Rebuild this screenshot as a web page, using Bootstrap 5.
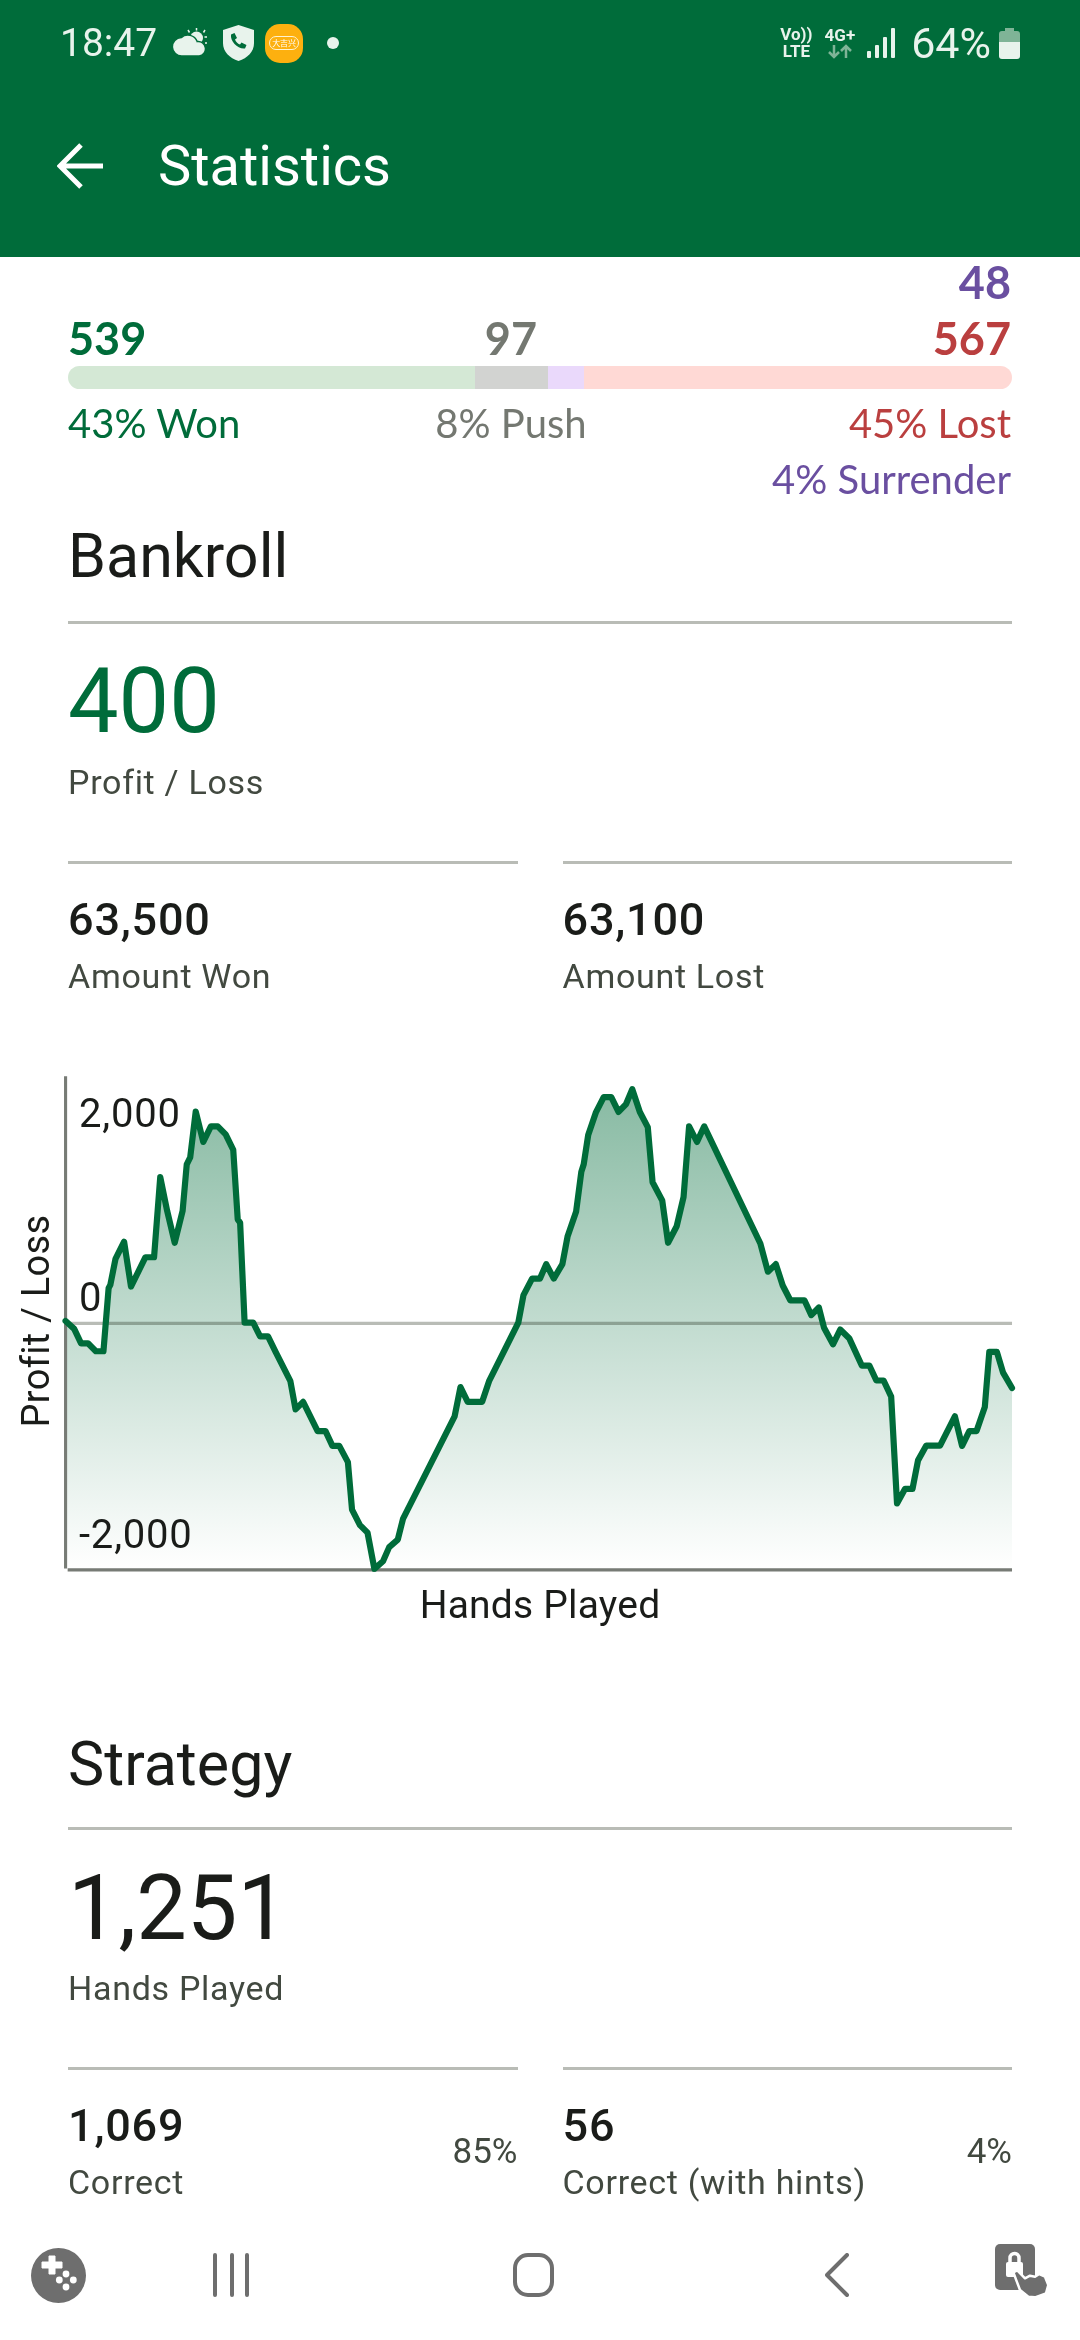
<!DOCTYPE html>
<html lang="en">
<head>
    <meta charset="UTF-8">
    <meta name="viewport" content="width=device-width, initial-scale=1.0">
    <title>Statistics</title>
    <link href="https://cdn.jsdelivr.net/npm/bootstrap@5.3.2/dist/css/bootstrap.min.css" rel="stylesheet">
    <style>
        html, body { height: 100%; }
        body { background: #fff; color: #1a1c19; font-family: Roboto, sans-serif; overflow: hidden; }
        .app-shell { width: 1080px; height: 2340px; }

        /* top bars */
        .app-head { background: #006c3a; height: 257px; color: #fff; padding: 0; display: block; }
        .status-line { height: 86px; padding: 0 60px; color: #e8f3ec; }
        .status-time { font-size: 39px; line-height: 1; }
        .status-pct { font-size: 43px; line-height: 1; }
        .net-txt { font-size: 17px; font-weight: 700; line-height: 17px; text-align: center; color: #e8f3ec; }
        .yellow-app { width: 38px; height: 39px; margin-left: 11px; border-radius: 15px; background: #fdb00f; }
        .yellow-pill { font-size: 8px; line-height: 11px; width: 30px; height: 14px; border: 1.5px solid #fff3d0; border-radius: 7px; color: #fff; text-align: center; font-family: "Noto Sans CJK SC", sans-serif; overflow: hidden; white-space: nowrap; }
        .status-dot { width: 12px; height: 12px; border-radius: 50%; background: #e8f3ec; }
        .net-gap { margin-left: 12px; }
        .head-row { height: 80px; padding-left: 57px; margin-top: 40px; }
        .head-title { font-size: 56px; line-height: 1; margin-left: 55px; }

        /* page body */
        .stats-body { padding: 5px 68px 0; height: 1963px; }
        .count-line { font-family: Lato, sans-serif; font-weight: 700; font-size: 45px; line-height: 40px; padding-right: 1px; }
        .label-line { font-family: Lato, sans-serif; font-size: 40px; line-height: 44px; padding-right: 1px; }
        .tone-won { color: #006c3a; }
        .tone-push { color: #747871; }
        .tone-lost { color: #ba3f3f; }
        .tone-sur { color: #6a4fa0; }
        .mid-cell { display: flex; justify-content: center; white-space: nowrap; }
        .tally-bar { height: 23px; border-radius: 12px; background: #fff; }
        .bar-won { background: #d4e8d5; }
        .bar-push { background: #d2d3d1; }
        .bar-sur { background: #ead9fb; }
        .bar-lost { background: #ffd9d5; }
        .sect-title { font-size: 61px; line-height: 70px; font-weight: 400; margin: 0; }
        .rule-line { height: 3px; background: #b9bcb6; }
        .big-num { font-size: 90px; line-height: 100px; }
        .sub-label { font-size: 34px; line-height: 38px; color: #424940; letter-spacing: .7px; }
        .mid-num { font-size: 45px; line-height: 50px; font-weight: 500; letter-spacing: .8px; }
        .pct-label { font-size: 35px; color: #424940; padding-top: 3px; }
        .stat-row { --bs-gutter-x: 45px; }

        /* chart */
        .chart-box { position: relative; margin: 66px -68px 0; height: 524px; }
        .chart-box svg { display: block; }
        .chart-txt { position: absolute; font-size: 40px; line-height: 40px; letter-spacing: .8px; color: #1a1c19; }
        .ax-title { left: 36px; top: 260px; font-size: 38px; letter-spacing: .3px; transform: translate(-50%, -50%) rotate(-90deg); white-space: nowrap; }
        .hands-label { font-size: 39px; line-height: 40px; letter-spacing: .2px; text-align: center; margin-left: -68px; margin-right: -68px; }

        /* space between stacked blocks */
        .sp-10 { margin-top: 10px; } .sp-11 { margin-top: 11px; } .sp-12 { margin-top: 12px; } .sp-16 { margin-top: 16px; }
        .sp-20 { margin-top: 20px; } .sp-28 { margin-top: 28px; } .sp-29 { margin-top: 29px; }
        .sp-30 { margin-top: 30px; } .sp-31 { margin-top: 31px; }
        .sp-60 { margin-top: 60px; } .sp-62 { margin-top: 62px; } .sp-104 { margin-top: 104px; }

        /* bottom bar */
        .sys-nav { height: 120px; padding-left: 31px; padding-bottom: 10px; }
        .sys-nav svg { flex: none; }
        .nav-b { margin-left: 127px; } .nav-c { margin-left: 264px; } .nav-d { margin-left: 271px; } .nav-e { margin-left: 146px; }
    </style>
</head>
<body>
<div class="app-shell d-flex flex-column">
    <nav class="navbar app-head">
        <div class="status-line d-flex align-items-center">
            <span class="status-time">18:47</span>
            <!-- weather -->
            <svg class="ms-3" width="34" height="30" viewBox="0 0 34 30">
                <circle cx="23.500" cy="10" r="6.500" fill="#e8f3ec"/>
                <path d="M23.500 0v2.500M15 2l1.500 2.500M32 2l-1.500 2.500M34 9h-2.500M34 15h-2" stroke="#e8f3ec" stroke-width="1.500" fill="none"/>
                <path fill="#e8f3ec" stroke="#006c3a" stroke-width="1.500" d="M9 28a9.200 9.200 0 0 1-.8-18.400 10 10 0 0 1 16 4 6.800 6.800 0 0 1 2 14.400z"/>
            </svg>
            <!-- shield with phone -->
            <svg class="ms-3" width="31" height="36" viewBox="0 0 31 36">
                <path fill="#e8f3ec" d="M15.500 0 31 5v13c0 9-6.500 15-15.500 18C6.500 33 0 27 0 18V5z"/>
                <path fill="#006c3a" d="M8 9.500l3.500-1.500 2.500 5-2 1.500c1 2.500 2.500 4 5 5l1.500-2 5 2.500-1.500 3.500c-7 1-15-7-14-14z"/>
            </svg>
            <div class="yellow-app d-flex align-items-center justify-content-center">
                <div class="yellow-pill">大吉兴</div>
            </div>
            <div class="status-dot ms-4"></div>
            <div class="net-txt ms-auto">Vo))<br>LTE</div>
            <div class="net-gap text-center">
                <div class="net-txt">4G+</div>
                <svg class="d-block mx-auto" width="26" height="15" viewBox="0 0 26 15" fill="none" stroke-width="2.500">
                    <path d="M7 1v12M2 8l5 5 5-5" stroke="#7fb497"/>
                    <path d="M19 14V2M14 7l5-5 5 5" stroke="#7fb497"/>
                </svg>
            </div>
            <!-- signal -->
            <svg class="net-gap" width="28" height="30" viewBox="0 0 28 30" fill="#e8f3ec">
                <rect x="0" y="23" width="4" height="7" rx="1"/>
                <rect x="8" y="17" width="4" height="13" rx="1"/>
                <rect x="16" y="9" width="4" height="21" rx="1"/>
                <rect x="24" y="0" width="4" height="30" rx="1"/>
            </svg>
            <span class="status-pct ms-3">64%</span>
            <svg class="ms-2" width="21" height="31" viewBox="0 0 21 31">
                <path fill="#7fb497" d="M6 0h9v3h3a3 3 0 0 1 3 3v8H0V6a3 3 0 0 1 3-3h3z"/>
                <path fill="#e8f3ec" d="M0 14h21v14a3 3 0 0 1-3 3H3a3 3 0 0 1-3-3z"/>
            </svg>
        </div>
        <div class="head-row d-flex align-items-center">
            <svg width="46" height="46" viewBox="0 0 46 46" fill="none" stroke="#fff" stroke-width="5">
                <path d="M46 23H4M24 2 3 23l21 21"/>
            </svg>
            <span class="head-title">Statistics</span>
        </div>
    </nav>

    <main class="stats-body flex-grow-1">
        <div class="count-line tone-sur text-end">48</div>
        <div class="count-line d-flex sp-16">
            <div class="tone-won" style="width: 43.1%">539</div>
            <div class="tone-push mid-cell" style="width: 7.75%">97</div>
            <div class="tone-lost flex-grow-1 text-end">567</div>
        </div>
        <div class="progress tally-bar mt-2">
            <div class="progress-bar bar-won" style="width: 43.1%"></div>
            <div class="progress-bar bar-push" style="width: 7.75%"></div>
            <div class="progress-bar bar-sur" style="width: 3.8%"></div>
            <div class="progress-bar bar-lost" style="width: 45.35%"></div>
        </div>
        <div class="label-line d-flex sp-12">
            <div class="tone-won" style="width: 43.1%">43% Won</div>
            <div class="tone-push mid-cell" style="width: 7.75%">8% Push</div>
            <div class="tone-lost flex-grow-1 text-end">45% Lost</div>
        </div>
        <div class="label-line tone-sur text-end sp-12">4% Surrender</div>

        <h2 class="sect-title sp-20">Bankroll</h2>
        <div class="rule-line sp-30"></div>
        <div class="big-num tone-won sp-28">400</div>
        <div class="sub-label sp-11">Profit / Loss</div>
        <div class="row stat-row sp-60">
            <div class="col-6">
                <div class="rule-line"></div>
                <div class="mid-num sp-31">63,500</div>
                <div class="sub-label sp-12">Amount Won</div>
            </div>
            <div class="col-6">
                <div class="rule-line"></div>
                <div class="mid-num sp-31">63,100</div>
                <div class="sub-label sp-12">Amount Lost</div>
            </div>
        </div>

        <div class="chart-box">
            <svg id="profitChart" width="1080" height="524" viewBox="0 0 3136 1522">
                <defs>
                    <linearGradient id="areaFill" x1="0" y1="80" x2="0" y2="1478" gradientUnits="userSpaceOnUse">
                        <stop offset="0" stop-color="#006c3a" stop-opacity=".47"/>
                        <stop offset="1" stop-color="#006c3a" stop-opacity="0"/>
                    </linearGradient>
                </defs>
                <path id="areaPath" fill="url(#areaFill)"/>
                <path d="M190 762H2939" stroke="#b9bcb6" stroke-width="9" style="mix-blend-mode: multiply"/>
                <path d="M190 44V1474M196 1478H2939" stroke="#777b75" stroke-width="9" fill="none"/>
                <path id="linePath" fill="none" stroke="#006c3a" stroke-width="18" stroke-linejoin="round" stroke-linecap="round"/>
            </svg>
            <span class="chart-txt ax-title">Profit / Loss</span>
            <span class="chart-txt" style="left: 79px; top: 33px">2,000</span>
            <span class="chart-txt" style="left: 79px; top: 217px">0</span>
            <span class="chart-txt" style="left: 79px; top: 454px">-2,000</span>
        </div>
        <div class="hands-label">Hands Played</div>

        <h2 class="sect-title sp-104">Strategy</h2>
        <div class="rule-line sp-28"></div>
        <div class="big-num sp-29">1,251</div>
        <div class="sub-label sp-10">Hands Played</div>
        <div class="row stat-row sp-60">
            <div class="col-6">
                <div class="rule-line"></div>
                <div class="d-flex justify-content-between align-items-center sp-31">
                    <div>
                        <div class="mid-num">1,069</div>
                        <div class="sub-label sp-12">Correct</div>
                    </div>
                    <div class="pct-label">85%</div>
                </div>
            </div>
            <div class="col-6">
                <div class="rule-line"></div>
                <div class="d-flex justify-content-between align-items-center sp-31">
                    <div>
                        <div class="mid-num">56</div>
                        <div class="sub-label sp-12">Correct (with hints)</div>
                    </div>
                    <div class="pct-label">4%</div>
                </div>
            </div>
        </div>
    </main>

    <footer class="sys-nav d-flex align-items-center bg-white">
        <svg width="55" height="55" viewBox="0 0 55 55">
            <circle cx="27.500" cy="27.500" r="27.500" fill="#6e6e6e"/>
            <path fill="#fff" stroke="#fff" stroke-width="1" stroke-linejoin="round" d="M18 8h6v6h7v6h-7v6h-6v-6h-7v-6h7z"/>
            <circle cx="35" cy="26" r="3.400" fill="#fff"/><circle cx="28.300" cy="32" r="3.400" fill="#fff"/>
            <circle cx="42.300" cy="32" r="3.400" fill="#fff"/><circle cx="35" cy="39" r="3.400" fill="#fff"/>
        </svg>
        <svg class="nav-b" width="36" height="44" viewBox="0 0 36 44" stroke="#6e6e6e" stroke-width="4" stroke-linecap="round">
            <path d="M2 2v40M19 2v40M34 2v40"/>
        </svg>
        <svg class="nav-c" width="41" height="44" viewBox="0 0 41 44" fill="none">
            <rect x="2" y="2" width="37" height="40" rx="13" stroke="#6e6e6e" stroke-width="4"/>
        </svg>
        <svg class="nav-d" width="24" height="44" viewBox="0 0 24 44" fill="none" stroke="#6e6e6e" stroke-width="4" stroke-linecap="round" stroke-linejoin="round">
            <path d="M22 2 2 22l20 20"/>
        </svg>
        <svg class="nav-e mb-2" width="54" height="54" viewBox="0 0 54 54">
            <rect x="0" y="0" width="40" height="46" rx="5" fill="#6e6e6e"/>
            <rect x="11" y="18" width="17" height="15" rx="2" fill="#fff"/>
            <path d="M15 19v-5a4.500 4.500 0 0 1 9 0v5" fill="none" stroke="#fff" stroke-width="3.500"/>
            <path fill="#6e6e6e" stroke="#fff" stroke-width="2.500" stroke-linejoin="round" d="M18.300 28.300 22.300 26.300 30 34.300 35 31.700 40 32.700 44.300 30 50 32.700 53.300 41 51 49.300 40 53.300 33.300 52.700 25 46z"/>
        </svg>
    </footer>
</div>

<script>
    // traced from the chart: x,y pairs in a 2.904x grid, right half is offset by 1568
    const leftPts = [190,755,215,778,235,820,255,820,278,843,300,843,315,660,320,650,335,575,360,525,380,655,422,570,447,570,465,337,485,435,507,528,530,435,542,300,552,280,568,147,590,235,612,190,632,190,655,213,677,258,690,460,697,470,710,760,735,760,755,800,778,800,800,845,843,930,858,1012,880,990,922,1075,945,1075,965,1118,985,1118,1010,1165,1022,1303,1045,1348,1067,1370,1087,1475,1112,1453,1130,1412,1155,1390,1170,1330,1320,1032,1337,947,1358,990,1400,990,1420,930,1505,760,1520,680,1545,632];
    const rightPts = [0,632,18,590,40,632,65,590,80,510,105,437,120,322,127,300,140,215,162,150,185,105,207,105,228,148,250,125,268,82,290,148,313,192,327,352,355,405,372,528,397,480,417,395,433,190,456,235,477,190,640,530,662,612,685,590,705,652,727,695,768,695,788,738,810,716,825,775,851,823,872,780,898,805,935,885,957,885,977,928,998,928,1020,975,1037,1285,1060,1243,1082,1243,1098,1160,1122,1117,1162,1117,1205,1032,1226,1118,1247,1075,1268,1075,1292,1005,1305,845,1327,845,1345,905,1371,950];
    const pts = [];
    for (let i = 0; i < leftPts.length; i += 2) pts.push(leftPts[i] + "," + leftPts[i + 1]);
    for (let i = 0; i < rightPts.length; i += 2) pts.push((rightPts[i] + 1568) + "," + rightPts[i + 1]);
    const line = "M" + pts.join("L");
    document.getElementById("linePath").setAttribute("d", line);
    document.getElementById("areaPath").setAttribute("d", line + "L2939,1474L190,1474Z");
</script>
<script src="https://cdn.jsdelivr.net/npm/bootstrap@5.3.2/dist/js/bootstrap.bundle.min.js"></script>
</body>
</html>
